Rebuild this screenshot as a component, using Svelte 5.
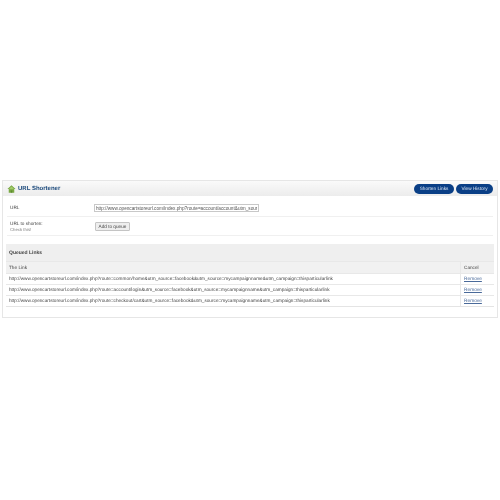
<script>
  const links = [
    'http://www.opencartstoreurl.com/index.php?route=common/home&utm_source=facebook&utm_source=mycampaignname&utm_campaign=thisparticularlink',
    'http://www.opencartstoreurl.com/index.php?route=account/login&utm_source=facebook&utm_source=mycampaignname&utm_campaign=thisparticularlink',
    'http://www.opencartstoreurl.com/index.php?route=checkout/cart&utm_source=facebook&utm_source=mycampaignname&utm_campaign=thisparticularlink'
  ];
</script>

<div class="page">
  <section class="panel">
    <header class="head">
      <h1>
        <svg class="icon" viewBox="0 0 12 11" width="9" height="8" aria-hidden="true">
          <path d="M6 .5 11.6 5.6H9.8V10.5H2.2V5.6H.4Z" fill="#7aa844" />
          <path d="M6 2 9 4.8V6H3V4.8Z" fill="#a3cc6c" />
          <path d="M5 7.5H7V10.5H5Z" fill="#5c8a30" />
        </svg>
        URL Shortener
      </h1>
      <div class="actions">
        <span class="pill">Shorten Links</span>
        <span class="pill">View History</span>
      </div>
    </header>
    <div class="row row-url">
      <div class="label">URL</div>
      <input class="field" readonly value="http://www.opencartstoreurl.com/index.php?route=account/account&utm_source=facebook" />
    </div>
    <div class="row row-add">
      <div class="label">URL to shorten:<small>Check this!</small></div>
      <span class="btn">Add to queue</span>
    </div>
    <div class="queued">
      <h2>Queued Links</h2>
      <div class="table">
        <div class="tr th"><div class="c1">The Link</div><div class="c2">Cancel</div></div>
        {#each links as link}
          <div class="tr"><div class="c1">{link}</div><div class="c2"><span class="remove">Remove</span></div></div>
        {/each}
      </div>
    </div>
  </section>
</div>

<style>
  :global(body) { margin: 0; background: #fff; }
  .page {
    width: 500px;
    height: 500px;
    box-sizing: border-box;
    padding: 180px 2px 0 2px;
    font-family: "Liberation Sans", Arial, sans-serif;
    font-size: 4.7px;
    color: #444;
    text-rendering: geometricPrecision;
  }
  .panel {
    height: 138px;
    box-sizing: border-box;
    border: 1px solid #e6e6e6;
    display: flex;
    flex-direction: column;
    filter: blur(0.3px);
  }
  .head {
    height: 15px;
    flex: none;
    display: flex;
    align-items: center;
    justify-content: space-between;
    padding: 0 4px 0 4px;
    background: linear-gradient(#fafafa, #ececec);
  }
  h1 {
    margin: 0;
    display: flex;
    align-items: center;
    gap: 2px;
    font-size: 6px;
    font-weight: bold;
    color: #1c4a7c;
  }
  .actions { display: flex; gap: 2px; }
  .pill {
    height: 10px;
    line-height: 10px;
    width: 40px;
    text-align: center;
    border-radius: 5px;
    background: #0a3f86;
    color: #dfe8f4;
    font-size: 4.7px;
  }
  .pill + .pill { width: 37px; }
  .row {
    display: flex;
    align-items: center;
    margin: 0 4px;
    border-bottom: 1px solid #f0f0f0;
    padding-left: 3px;
    flex: none;
    box-sizing: border-box;
  }
  .row-url { height: 21px; padding-top: 4px; }
  .row-add { height: 19px; padding-top: 1px; }
  .label { width: 84px; flex: none; color: #444; line-height: 6px; }
  .label small { display: block; font-size: 4.3px; color: #808080; }
  .field {
    width: 165px;
    height: 8px;
    box-sizing: border-box;
    border: 1px solid #c8c8c8;
    margin: 0;
    padding: 0 1px;
    outline: none;
    font: inherit;
    color: #555;
    background: #fff;
  }
  .btn {
    height: 9px;
    line-height: 8px;
    margin-left: 1px;
    padding: 0 2.5px;
    box-sizing: border-box;
    border: 1px solid #c4c4c4;
    border-radius: 1px;
    background: #eee;
    color: #444;
  }
  .queued { margin: 8px 3px 0 3px; background: #efefef; }
  h2 {
    margin: 0;
    height: 17px;
    padding-left: 3px;
    display: flex;
    align-items: center;
    font-size: 5px;
    font-weight: bold;
    color: #444;
  }
  .table { border-bottom: 1px solid #e4e4e4; background: #fff; }
  .tr {
    display: flex;
    height: 11px;
    line-height: 10px;
    border-top: 1px solid #e8e8e8;
    box-sizing: border-box;
    white-space: nowrap;
  }
  .th { background: #f1f1f1; height: 12px; line-height: 11px; }
  .c1 { width: 454px; flex: none; padding-left: 3px; box-sizing: border-box; overflow: hidden; }
  .c2 { flex: 1; padding-left: 3px; border-left: 1px solid #e8e8e8; }
  .remove { color: #4a6a9a; text-decoration: underline; font-size: 4.8px; }
</style>
